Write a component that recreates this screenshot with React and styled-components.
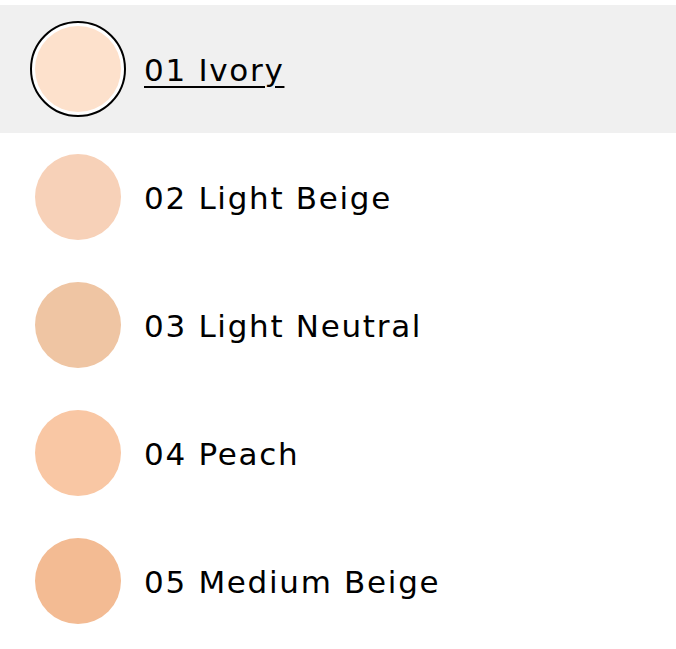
import React from "react";
import styled, { createGlobalStyle } from "styled-components";

const Global = createGlobalStyle`
  html, body { margin: 0; padding: 0; background: #ffffff; }
  body { font-family: "DejaVu Sans", "Liberation Sans", sans-serif; }
`;

const List = styled.ul`
  list-style: none;
  margin: 0;
  padding: 5px 0 0 0;
  display: flex;
  flex-direction: column;
`;

const Row = styled.li`
  height: 128px;
  display: flex;
  align-items: center;
  gap: 18px;
  padding-left: 30px;
  box-sizing: border-box;
  background: ${(p) => (p.$active ? "#f0f0f0" : "#ffffff")};
`;

const Ring = styled.div`
  width: 96px;
  height: 96px;
  box-sizing: border-box;
  border-radius: 50%;
  border: 2px solid ${(p) => (p.$active ? "#000000" : "transparent")};
  background: ${(p) => (p.$active ? "#ffffff" : "transparent")};
  display: flex;
  align-items: center;
  justify-content: center;
  flex: none;
`;

const Swatch = styled.div`
  width: 86px;
  height: 86px;
  border-radius: 50%;
  background: ${(p) => p.$color};
`;

const Label = styled.span`
  font-family: "DejaVu Sans", "Liberation Sans", sans-serif;
  font-size: 31px;
  letter-spacing: 1.7px;
  color: #000000;
  line-height: 1;
  margin-top: 2px;
  text-decoration: ${(p) => (p.$active ? "underline" : "none")};
  text-decoration-thickness: 2px;
  text-underline-offset: 5px;
`;

const shades = [
  { name: "01 Ivory", color: "#fde1cc" },
  { name: "02 Light Beige", color: "#f7d1b8" },
  { name: "03 Light Neutral", color: "#efc5a3" },
  { name: "04 Peach", color: "#f9c7a4" },
  { name: "05 Medium Beige", color: "#f3bb93" },
];

export default function App() {
  return (
    <>
      <Global />
      <List>
        {shades.map((s, i) => (
          <Row key={s.name} $active={i === 0}>
            <Ring $active={i === 0}>
              <Swatch $color={s.color} />
            </Ring>
            <Label $active={i === 0}>{s.name}</Label>
          </Row>
        ))}
      </List>
    </>
  );
}
